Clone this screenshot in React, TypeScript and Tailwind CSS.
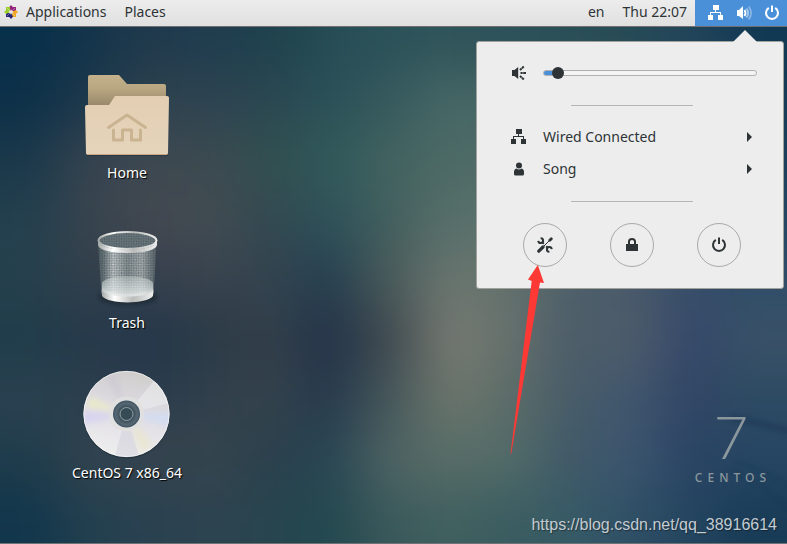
import { useState } from "react";
import type { ReactNode } from "react";

// Wallpaper tones, one row per 60px band, blurred together below
const tones = [
  "07304a 13344b 20394c 1f3d4f 1e414d 264c55 2b5259 2f5359 2c5059 294d56 264955 22445a 123953",
  "0d3049 1d384b 2e424e 2e4351 2a4751 2b5058 36595d 476867 456663 42625f 375762 2c4d5e 163c58",
  "1a384a 374450 3e4850 3c4a50 31504f 31595a 42635f 4d6a66 4d6a66 486561 405d62 30505f 1c405c",
  "24404e 38444e 434850 434c53 334850 2d525a 435f5e 576f6a 5a716c 50696a 465f68 355265 244763",
  "26404d 333f4b 36404e 39434e 33434f 253f50 4a5b59 6b7670 63716c 4d5f69 4a5a6b 374d69 304d68",
  "1f3c4a 26394a 23364a 2a3a46 333f4a 233248 3f494f 797b73 66716c 4c5c69 4f5d6a 35476a 3a5268",
  "2b4150 2c3f4e 2c3c4c 31404c 34424c 263a4d 46585a 6c766c 5c6c68 475c68 40566e 314565 2c4a62",
  "1e3c4b 33434f 35434e 36454e 2a404c 284653 4f6464 586d67 526c69 405867 3d5670 294363 274664",
  "12364c 22404f 2a4150 2d4350 28454f 22484f 3b595b 40605f 3a5c60 365b66 2f4f66 24455f 183b56",
];

function Wallpaper() {
  return (
    <svg
      className="absolute inset-0 h-full w-full"
      viewBox="0 0 787 544"
      preserveAspectRatio="none"
      aria-hidden="true"
    >
      <defs>
        <filter id="soft" x="-10%" y="-10%" width="120%" height="120%" colorInterpolationFilters="sRGB">
          <feGaussianBlur stdDeviation="26" />
        </filter>
        <filter id="streak" x="-30%" y="-100%" width="160%" height="300%">
          <feGaussianBlur stdDeviation="2" />
        </filter>
      </defs>
      <g filter="url(#soft)">
        {tones.map((row, r) =>
          row.split(" ").map((tone, c, all) => {
            const left = c === 0 ? -100 : c * 60;
            const right = c === all.length - 1 ? 887 : c * 60 + 61;
            const top = r === 0 ? -100 : 10 + r * 60;
            const bottom = r === tones.length - 1 ? 644 : 71 + r * 60;
            return (
              <rect
                key={`${r}-${c}`}
                x={left}
                y={top}
                width={right - left}
                height={bottom - top}
                fill={`#${tone}`}
              />
            );
          })
        )}
      </g>
      <g filter="url(#streak)" stroke="#17334f" opacity=".4" fill="none">
        <path d="M730 418q30 6 60 14" strokeWidth="7" />
        <path d="M735 462q30 10 60 30M730 470q30 14 60 40" strokeWidth="2" />
      </g>
    </svg>
  );
}

function WiredIcon() {
  return (
    <svg className="size-4 shrink-0" viewBox="0 0 16 16" fill="currentColor" aria-hidden="true">
      <path d="M5 0h6v5H5zM0 10h5v5H0zM10 10h5v5h-5zM7 5h1v2h5v3h-1V8H3v2H2V7h5z" />
    </svg>
  );
}

function VolumeIcon() {
  return (
    <svg className="size-4 shrink-0" viewBox="0 0 16 16" fill="none" stroke="currentColor" aria-hidden="true">
      <path d="M1 5h2L7 1v13L3 11H1z" fill="currentColor" stroke="none" />
      <path d="M8.500 5q2 3 0 6" strokeWidth="1.800" />
      <path d="M10.500 3.500q3.200 4.500 0 9" strokeWidth="1.800" opacity=".5" />
      <path d="M12.800 1.500q4.400 6.500 0 13" strokeWidth="1.800" opacity=".35" />
    </svg>
  );
}

function QuietIcon() {
  return (
    <svg className="size-4 shrink-0" viewBox="0 0 16 16" fill="none" stroke="currentColor" aria-hidden="true">
      <path d="M1 5h2.500L7.200 2v12L3.500 11H1z" fill="currentColor" stroke="none" />
      <path d="M9.500 8H15M9 5l3.800-3.500M9 11l3.800 3.500" strokeWidth="2" strokeDasharray="2.200 .5 9" />
    </svg>
  );
}

function UserIcon() {
  return (
    <svg className="size-4 shrink-0" viewBox="0 0 16 16" fill="currentColor" aria-hidden="true">
      <circle cx="8" cy="4.500" r="3" />
      <path d="M5.500 7.500Q8 9.300 10.500 7.500Q13 8 13 11v2q0 1.500-1.500 1.500h-7Q3 14.500 3 13v-2q0-3 2.500-3.500z" />
    </svg>
  );
}

function PowerIcon() {
  return (
    <svg className="size-4 shrink-0" viewBox="0 0 16 16" fill="none" stroke="currentColor" strokeWidth="2" aria-hidden="true">
      <path d="M4.800 2.900a6 6 0 1 0 6.400 0M8 .5v6.500" />
    </svg>
  );
}

function LockIcon() {
  return (
    <svg className="size-4 shrink-0" viewBox="0 0 16 16" fill="none" aria-hidden="true">
      <path d="M2 7h12v7H2z" fill="currentColor" />
      <path d="M5 8V4.500Q5 2 8 2t3 2.500V8" stroke="currentColor" strokeWidth="2" />
    </svg>
  );
}

function ToolsIcon() {
  return (
    <svg className="size-4 shrink-0" viewBox="0 0 16 16" fill="none" stroke="currentColor" aria-hidden="true">
      <path d="M1.800 14.200L6 10" strokeWidth="3.200" strokeLinecap="round" />
      <path d="M6.500 9.500L14 2" strokeWidth="1" />
      <path d="M12.800 3.200L14.300 1.700" strokeWidth="2.800" strokeLinecap="round" />
      <path d="M5 5l1.800 1.800M9.200 9.200L11 11" strokeWidth="2" />
      <path d="M3.600 1.300A2.400 2.400 0 1 1 1.300 3.900" strokeWidth="2" />
      <path d="M12.400 14.700A2.400 2.400 0 1 1 14.700 12.100" strokeWidth="2" />
    </svg>
  );
}

function CentosLogo() {
  const colors = ["#932279", "#efa724", "#262577", "#9ccd2a"];
  return (
    <svg className="size-3.5 shrink-0" viewBox="0 0 14 14" aria-hidden="true">
      {colors.map((c, i) => (
        <g key={c} fill={c} transform={`rotate(${i * 90} 7 7)`}>
          <path d="M8 2h4v4H8z" />
          <path d="M7 0l2 2.200-2 3.800-2-3.800z" />
        </g>
      ))}
      <path d="M3 3l8 8M11 3l-8 8" stroke="#eee" strokeWidth=".4" />
    </svg>
  );
}

function FolderArt() {
  return (
    <svg className="size-24" viewBox="0 0 96 96" aria-hidden="true">
      <defs>
        <linearGradient id="back" x1="0" y1="0" x2="0" y2="1">
          <stop offset="0" stopColor="#c5b28c" />
          <stop offset=".4" stopColor="#b7a581" />
          <stop offset="1" stopColor="#8c7c60" />
        </linearGradient>
        <linearGradient id="front" x1="0" y1="0" x2="0" y2="1">
          <stop offset="0" stopColor="#e3ceb2" />
          <stop offset="1" stopColor="#e5d4bb" />
        </linearGradient>
      </defs>
      <path d="M7 87h82v2H7z" fill="#14232d" opacity=".35" />
      <path d="M9 10q0-2 2-2h29l8 9h37q2 0 2 2v26H9z" fill="url(#back)" />
      <path d="M6 40q0-2 2-2h22l6-9h52q2 0 2 2l-1 55q0 2-2 2H9q-2 0-2-2z" fill="url(#front)" />
      <path d="M8 87.500h80" stroke="#c9a883" />
      <path d="M29.500 60.500L48 48l18.500 12.500" fill="none" stroke="#c9b391" strokeWidth="3" strokeLinecap="round" strokeLinejoin="round" />
      <path d="M34.500 63v10h9V63h9v10h9V63" fill="none" stroke="#c9b391" strokeWidth="3" strokeLinejoin="round" strokeLinecap="round" />
    </svg>
  );
}

function TrashArt() {
  return (
    <svg className="size-24" viewBox="0 0 96 96" aria-hidden="true">
      <defs>
        <pattern id="mesh" width="2.400" height="2.400" patternUnits="userSpaceOnUse" patternTransform="rotate(45)">
          <rect width="1.200" height="1.200" fill="#23323a" opacity=".5" />
          <rect x="1.200" y="1.200" width="1.200" height="1.200" fill="#23323a" opacity=".5" />
        </pattern>
        <linearGradient id="can">
          <stop offset="0" stopColor="#5c6d70" />
          <stop offset=".1" stopColor="#7e8b8d" />
          <stop offset=".26" stopColor="#f0f2f1" />
          <stop offset=".5" stopColor="#a2abab" />
          <stop offset=".75" stopColor="#cdd1d0" />
          <stop offset="1" stopColor="#5f6d71" />
        </linearGradient>
        <linearGradient id="floor" x1="0" y1="0" x2="0" y2="1">
          <stop offset="0" stopColor="#dfe8e5" stopOpacity=".35" />
          <stop offset="1" stopColor="#f2f5f4" stopOpacity=".85" />
        </linearGradient>
        <linearGradient id="rim">
          <stop offset="0" stopColor="#a5a9a7" />
          <stop offset=".25" stopColor="#fff" />
          <stop offset=".6" stopColor="#b9bcba" />
          <stop offset="1" stopColor="#eee" />
        </linearGradient>
        <filter id="shade" x="-20%" y="-50%" width="140%" height="200%">
          <feGaussianBlur stdDeviation="2" />
        </filter>
      </defs>
      <ellipse cx="49" cy="80" rx="29" ry="7" fill="#101a22" opacity=".6" filter="url(#shade)" />
      <path d="M19 24l3.500 52c6 11 46 11 52 0L77.500 24z" fill="url(#can)" opacity=".85" />
      <path d="M19 24l3.500 46c6 9 46 9 52 0L77.500 24z" fill="url(#mesh)" />
      <path d="M23 66c3-9 48-9 51 0v9c-3 9-48 9-51 0z" fill="url(#floor)" />
      <path d="M22.500 72c1 10 51 10 52 0l-.5 7c-6 8.500-45 8.500-51 0z" fill="url(#rim)" />
      <ellipse cx="48.500" cy="24" rx="29" ry="8.500" fill="#738084" />
      <ellipse cx="48.500" cy="24" rx="29" ry="8.500" fill="url(#mesh)" />
      <ellipse cx="48.500" cy="23.500" rx="29" ry="8.500" fill="none" stroke="url(#rim)" strokeWidth="2" />
      <path d="M19 24c0 11.500 59 11.500 59 0v3.500c0 11.500-59 11.500-59 0z" fill="url(#rim)" />
    </svg>
  );
}

function DiscArt() {
  return (
    <svg className="size-24" viewBox="0 0 96 96" aria-hidden="true">
      <defs>
        <linearGradient id="disc" x1=".6" y1="0" x2=".4" y2="1">
          <stop offset="0" stopColor="#cfcdcb" />
          <stop offset=".45" stopColor="#dedce3" />
          <stop offset="1" stopColor="#efeeee" />
        </linearGradient>
        <radialGradient id="hub">
          <stop offset=".45" stopColor="#344a55" />
          <stop offset=".8" stopColor="#576873" />
          <stop offset="1" stopColor="#3b5160" />
        </radialGradient>
        <filter id="sheen">
          <feGaussianBlur stdDeviation="3" />
        </filter>
        <clipPath id="platter">
          <circle cx="47.500" cy="47" r="43" />
        </clipPath>
      </defs>
      <circle cx="47.500" cy="48" r="43.500" fill="#101d26" opacity=".35" />
      <circle cx="47.500" cy="47" r="43" fill="url(#disc)" />
      <g clipPath="url(#platter)">
        <path d="M47.500 47L78 10l20 24z" fill="#efeff1" opacity=".5" />
        <path d="M47.500 47L34 96H62z" fill="#d0cfdb" opacity=".5" />
        <g filter="url(#sheen)">
          <path d="M47.500 47L12 30l-6 10z" fill="#eeeec0" opacity=".8" />
          <path d="M47.500 47L4 44v14z" fill="#d5d0f2" opacity=".8" />
          <path d="M47.500 47L92 46v14z" fill="#cfdcf5" opacity=".8" />
          <path d="M47.500 47L74 78l-12 8z" fill="#ebe6c4" opacity=".6" />
          <path d="M47.500 47L25 5h12z" fill="#c4bed2" opacity=".4" />
        </g>
      </g>
      <circle cx="47.500" cy="47" r="42.700" fill="none" stroke="#fff" strokeWidth=".8" opacity=".8" />
      <circle cx="47.500" cy="47" r="17.500" fill="#e0e0df" opacity=".9" />
      <circle cx="47.500" cy="47" r="13.500" fill="url(#hub)" />
      <circle cx="47.500" cy="47" r="6.500" fill="#354b55" stroke="#95a1a7" />
    </svg>
  );
}

function DesktopItem({ label, children }: { label: string; children: ReactNode }) {
  return (
    <button className="flex h-[150px] w-32 flex-col items-center text-[14px] leading-5 text-white text-shadow-[1px_1px_1px_black]">
      {children}
      <span>{label}</span>
    </button>
  );
}

function MenuRow({ label, children }: { label: string; children: ReactNode }) {
  return (
    <button className="flex h-8 w-full items-center gap-4 pr-[31px] pl-[34px] text-left">
      {children}
      <span className="flex-1">{label}</span>
      <svg className="h-2.5 w-[5px]" viewBox="0 0 5 10" fill="currentColor" aria-hidden="true">
        <path d="M0 0l5 5-5 5z" />
      </svg>
    </button>
  );
}

function RoundButton({ label, children }: { label: string; children: ReactNode }) {
  return (
    <button
      aria-label={label}
      className="flex size-11 items-center justify-center rounded-full border border-[#a9a9a9]"
    >
      {children}
    </button>
  );
}

function SystemMenu() {
  const [volume, setVolume] = useState(4);
  const fill = `${volume + 2}%`;

  return (
    <div className="absolute top-[41px] right-[3px] w-77 rounded-[3px] border border-[#a1a19c] bg-[#ededed] pt-[15px] pb-[21px]">
      <svg className="absolute -top-3 right-6 h-3 w-7" viewBox="0 0 28 12" aria-hidden="true">
        <path d="M2 12L14 0l12 12z" fill="#ededed" />
      </svg>

      <label className="flex h-8 items-center gap-4 pr-[26px] pl-[34px]">
        <QuietIcon />
        <input
          type="range"
          aria-label="Volume"
          value={volume}
          onChange={(e) => setVolume(Number(e.target.value))}
          style={{ backgroundImage: `linear-gradient(to right, #4a90d9 ${fill}, #f4f4f4 ${fill})` }}
          className="h-1.5 min-w-0 flex-1 appearance-none rounded-full border border-[#b0b0b0] [&::-webkit-slider-thumb]:size-3 [&::-webkit-slider-thumb]:appearance-none [&::-webkit-slider-thumb]:rounded-full [&::-webkit-slider-thumb]:bg-[#2e3436]"
        />
      </label>

      <div className="mt-4 mr-[42px] mb-[15px] ml-[46px]">
        <hr className="mx-auto w-[122px] border-[#b5b5b5]" />
      </div>

      <MenuRow label="Wired Connected">
        <WiredIcon />
      </MenuRow>
      <MenuRow label="Song">
        <UserIcon />
      </MenuRow>

      <div className="mt-4 mr-[42px] ml-[46px]">
        <hr className="mx-auto w-[122px] border-[#b5b5b5]" />
        <div className="mt-[21px] flex justify-between">
          <RoundButton label="Settings">
            <ToolsIcon />
          </RoundButton>
          <RoundButton label="Lock">
            <LockIcon />
          </RoundButton>
          <RoundButton label="Power">
            <PowerIcon />
          </RoundButton>
        </div>
      </div>
    </div>
  );
}

export default function App() {
  return (
    <div className="relative flex min-h-screen flex-col overflow-hidden border-b border-[#6d7478] font-['Noto_Sans',sans-serif] text-[14px] leading-5 text-[#2e3436]">
      <Wallpaper />

      <header className="relative flex h-[27px] items-stretch border-b border-[#6f6f6f] bg-linear-to-b from-[#ededed] to-[#e0e0e0] pl-1">
        <button className="flex items-center gap-2 pb-0.5">
          <CentosLogo />
          Applications
        </button>
        <button className="ml-[18px] pb-0.5">Places</button>
        <button className="ml-auto pb-0.5">en</button>
        <button className="mx-2 pb-0.5 pl-2.5">Thu 22:07</button>
        <button aria-label="System menu" className="flex items-center gap-3 bg-[#4a90d9] pr-[7px] pl-[13px] text-white">
          <WiredIcon />
          <VolumeIcon />
          <PowerIcon />
        </button>
      </header>

      <main className="relative flex flex-1 items-stretch justify-between">
        <section className="flex flex-col pt-10 pl-[63px]">
          <DesktopItem label="Home">
            <FolderArt />
          </DesktopItem>
          <DesktopItem label="Trash">
            <TrashArt />
          </DesktopItem>
          <DesktopItem label="CentOS 7 x86_64">
            <DiscArt />
          </DesktopItem>
        </section>

        <section className="flex flex-col items-end justify-end pr-2.5 pb-2">
          <div className="flex flex-col items-center pr-1.5 pb-[29px] text-[#8b979c]">
            <span className="pb-1 font-['Lato'] text-[60px] leading-[60px] font-light">7</span>
            <span className="pl-1 text-[12px] leading-4 font-medium tracking-[5px]">CENTOS</span>
          </div>
          <a
            href="https://blog.csdn.net/qq_38916614"
            className="font-['Liberation_Sans',sans-serif] text-[16px] leading-5 text-[#c3cbd2] text-shadow-[1px_1px_1px_rgba(0,0,0,0.4)]"
          >
            https://blog.csdn.net/qq_38916614
          </a>
        </section>
      </main>

      <SystemMenu />

      <svg
        className="pointer-events-none absolute top-[265px] right-[242px] h-[190px] w-[35px]"
        viewBox="0 0 35 190"
        aria-hidden="true"
      >
        <path d="M27.800 0L34 18l-4-.5L1.200 189H.5L21.700 16l-3.700-1.500z" fill="#fd3936" />
      </svg>
    </div>
  );
}
